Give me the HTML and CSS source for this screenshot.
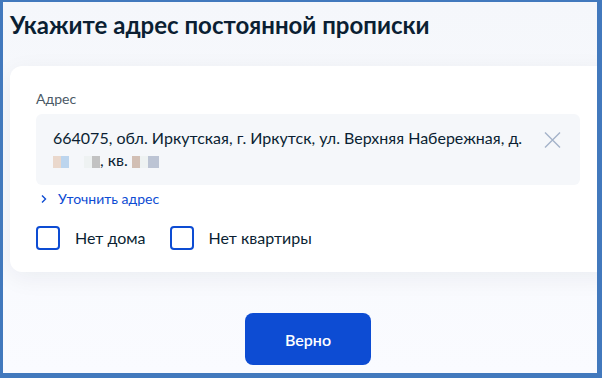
FILE: index.html
```html
<!DOCTYPE html>
<html lang="ru">
<head>
    <meta charset="UTF-8">
    <meta name="viewport" content="width=device-width, initial-scale=1.0">
    <title>Адрес прописки</title>
    <link rel="stylesheet" href="styles.css">
</head>
<body>
    <div class="frame">
        <h1 class="title">Укажите адрес постоянной прописки</h1>

        <div class="card">
            <div class="field-label">Адрес</div>
            <div class="address-box">
                <div class="address-text">
                    664075, обл. Иркутская, г. Иркутск, ул. Верхняя Набережная, д.<br>
                    <span class="blur">
                        <i class="px px-beige"></i><i class="px px-blue"></i><i class="px px-gap"></i><i class="px px-pale"></i><i class="px px-gray"></i>
                    </span>, кв. <span class="blur">
                        <i class="px px-brown"></i><i class="px px-pale"></i><i class="px px-slate"></i>
                    </span>
                </div>
                <button class="clear-btn" aria-label="Очистить">
                    <svg width="17" height="16" viewBox="0 0 17 16">
                        <path d="M1 0.5 L16 15.5 M16 0.5 L1 15.5" stroke="#a4b3c9" stroke-width="1.4" fill="none"/>
                    </svg>
                </button>
            </div>
            <a class="refine-link" href="#">
                <svg width="8" height="10" viewBox="0 0 8 10">
                    <path d="M2 1.5 L5.5 5 L2 8.5" stroke="#0d4cd3" stroke-width="1.4" fill="none"/>
                </svg>
                <span>Уточнить адрес</span>
            </a>
            <div class="checks">
                <label class="check"><span class="box"></span>Нет дома</label>
                <label class="check"><span class="box"></span>Нет квартиры</label>
            </div>
        </div>

        <div class="actions">
            <button class="btn-primary">Верно</button>
        </div>
    </div>
</body>
</html>
```

FILE: styles.css
```css
* {
    margin: 0;
    padding: 0;
    box-sizing: border-box;
}

body {
    font-family: Lato, "Noto Sans", sans-serif;
    color: #0b1f33;
}

.frame {
    width: 602px;
    height: 378px;
    overflow: hidden;
    border-style: solid;
    border-color: #4279bd;
    border-width: 2px 5px 5px 3px;
    background: linear-gradient(#f5f7fb, #fafbff);
    padding-left: 7px;
}

.title {
    font-size: 24px;
    font-weight: 700;
    line-height: 30px;
    margin-top: 8px;
}

.card {
    margin-top: 26px;
    margin-right: -20px;
    background: #fff;
    border-radius: 12px;
    box-shadow: 0 6px 24px rgba(11, 31, 51, 0.06);
    padding: 23px 37px 22px 26px;
}

.field-label {
    font-size: 14px;
    line-height: 19px;
    color: #4b5966;
}

.address-box {
    display: flex;
    align-items: flex-start;
    margin-top: 6px;
    background: #f5f7fa;
    border-radius: 6px;
    padding: 13px 19px 14px 17px;
}

.address-text {
    flex: 1;
    font-size: 16px;
    line-height: 22px;
}

.blur {
    display: inline-flex;
    vertical-align: -2px;
}

.px {
    width: 8px;
    height: 12px;
}

.px-beige { background: #ead8cc; }
.px-blue { background: #bcd5ee; }
.px-gap { width: 15px; background: transparent; }
.px-pale { background: #eef2f2; }
.px-gray { background: #c2c2c2; }
.px-brown { background: #d2bfb4; }
.px-slate { width: 11px; background: #bcc4d4; }

.clear-btn {
    border: none;
    background: none;
    margin-top: 5px;
    cursor: pointer;
}

.refine-link {
    display: inline-flex;
    align-items: center;
    gap: 10px;
    margin-top: 5px;
    margin-left: 4px;
    font-size: 14px;
    line-height: 17px;
    color: #0d4cd3;
    text-decoration: none;
}

.checks {
    display: flex;
    gap: 24px;
    margin-top: 19px;
}

.check {
    display: flex;
    align-items: center;
    gap: 15px;
    font-size: 16px;
    line-height: 24px;
}

.box {
    width: 24px;
    height: 24px;
    border: 2px solid #0d4cd3;
    border-radius: 4px;
}

.actions {
    display: flex;
    justify-content: center;
    padding-left: 9px;
    margin-top: 41px;
}

.btn-primary {
    width: 126px;
    height: 52px;
    border: none;
    border-radius: 8px;
    background: #0d4cd3;
    color: #fff;
    font-family: Lato, "Noto Sans", sans-serif;
    font-size: 16px;
    font-weight: 600;
}
```
